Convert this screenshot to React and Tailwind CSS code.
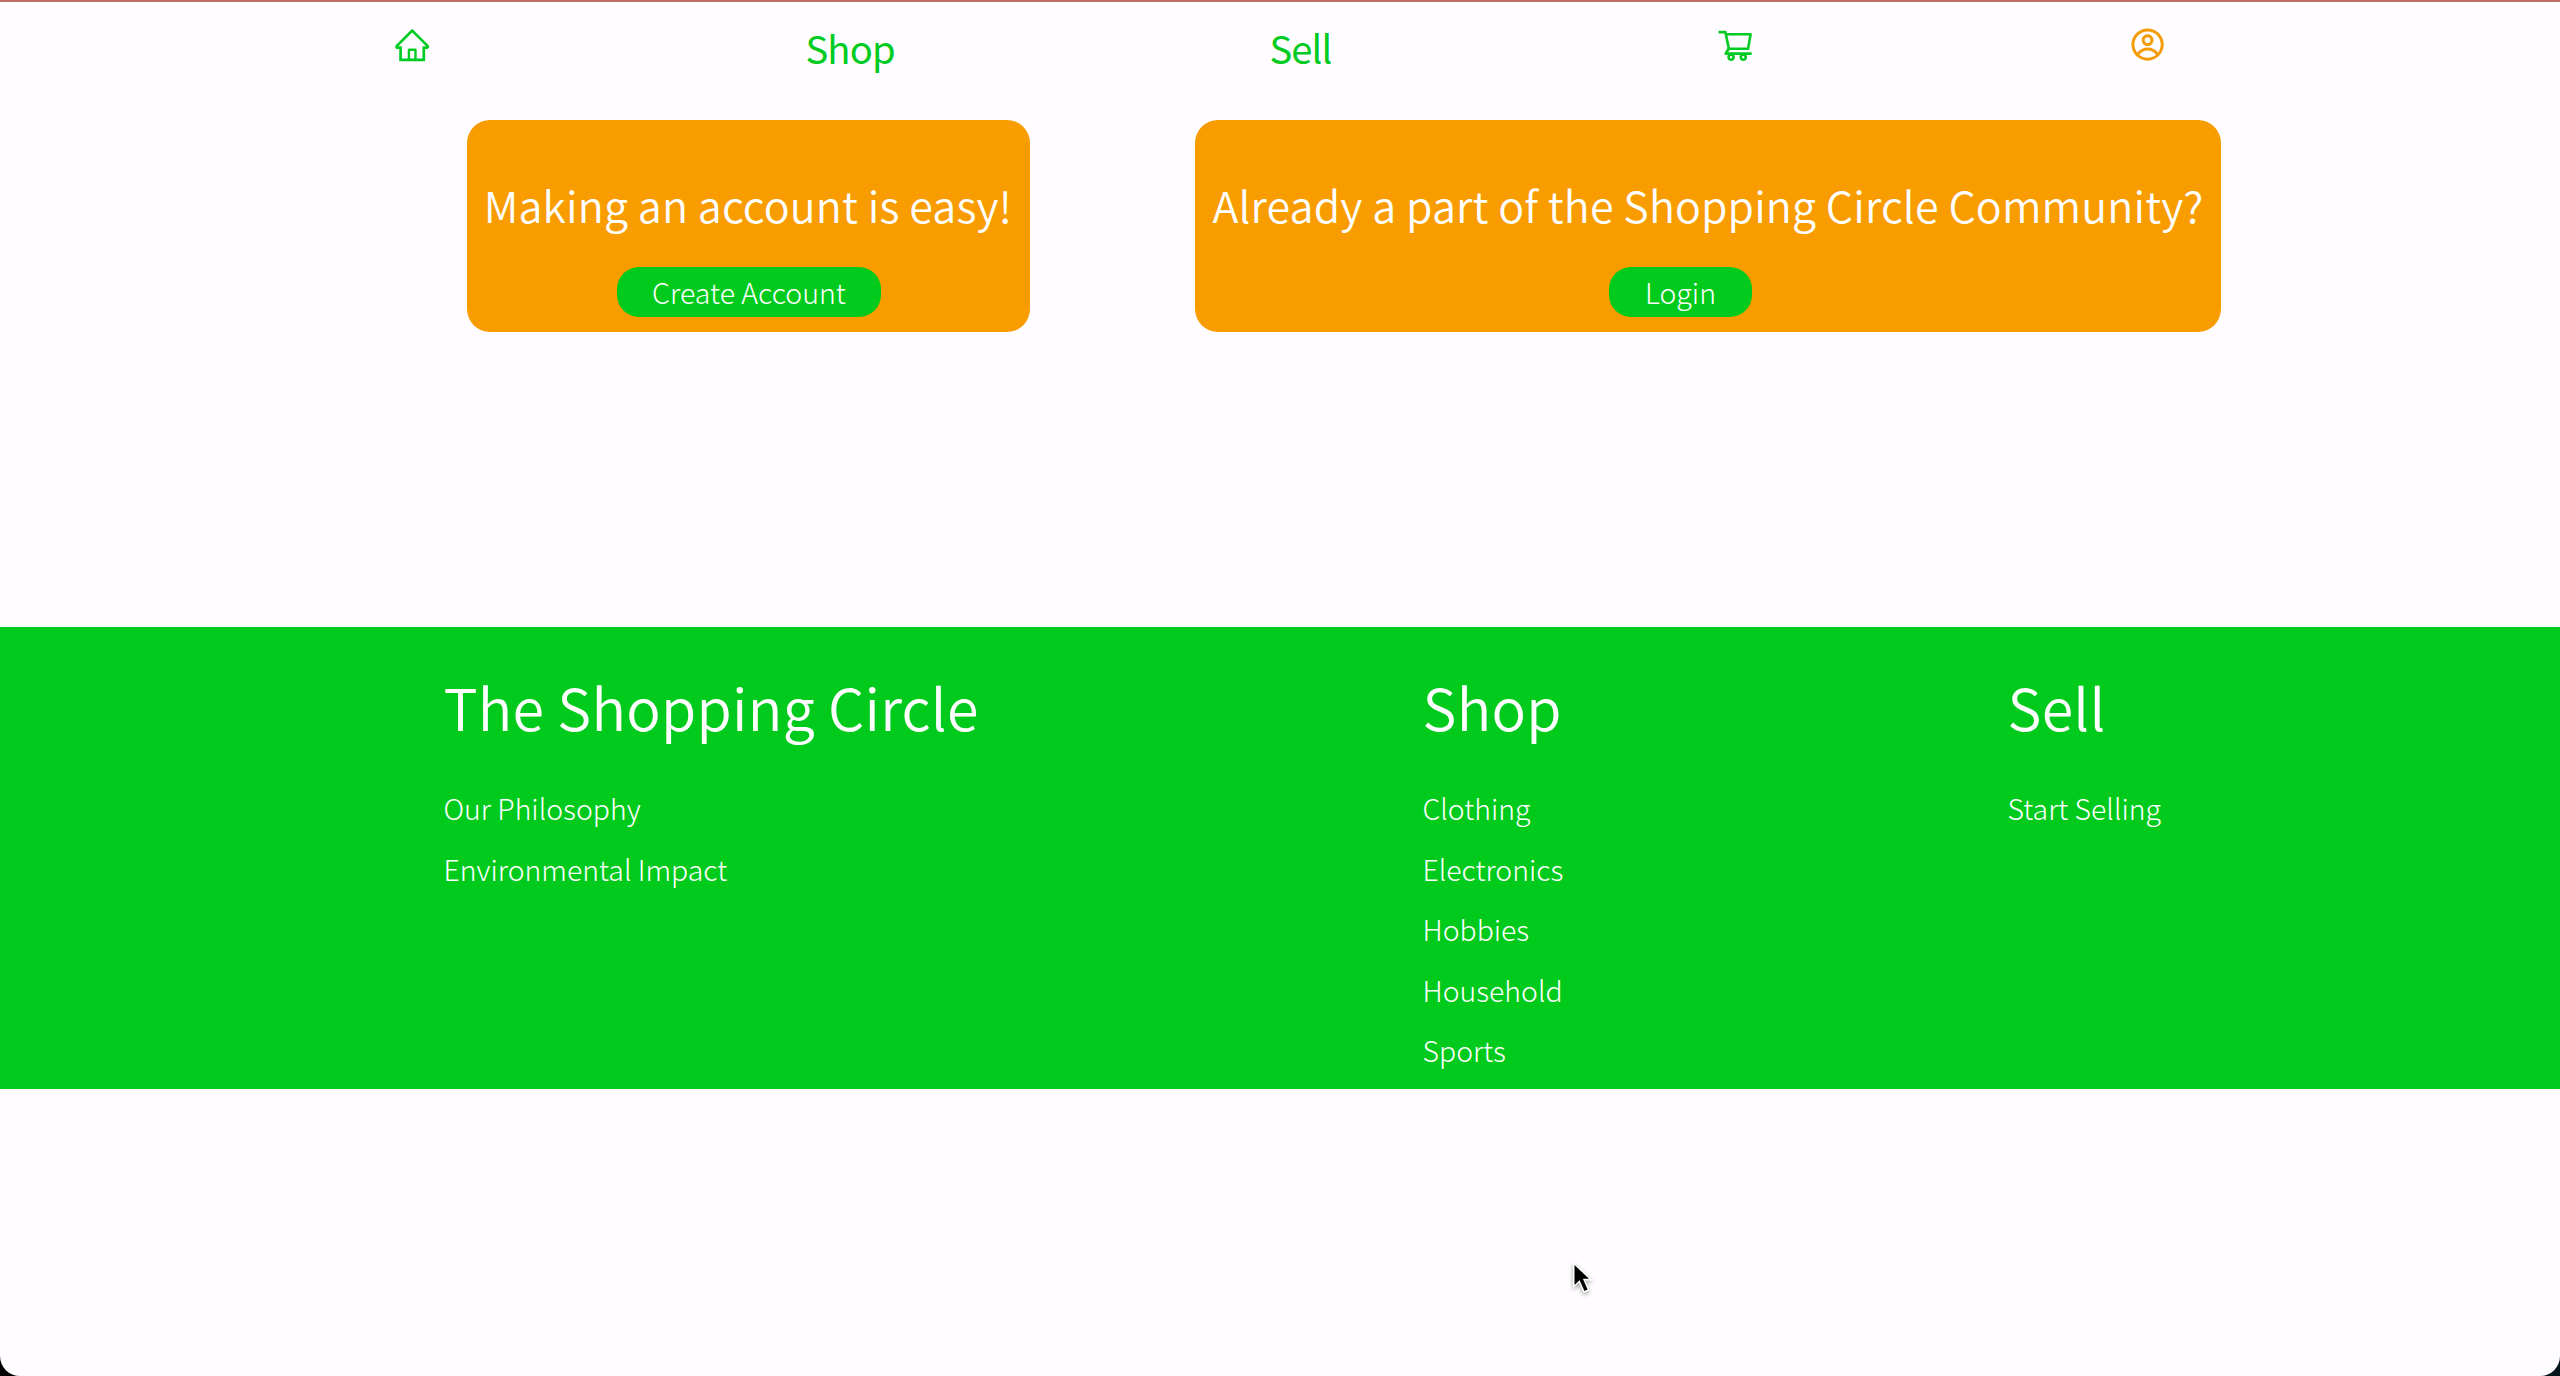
import { AiOutlineHome, AiOutlineShoppingCart } from 'react-icons/ai';
import { CgProfile } from 'react-icons/cg';

const columns = [
  { title: 'The Shopping Circle', links: ['Our Philosophy', 'Environmental Impact'] },
  { title: 'Shop', links: ['Clothing', 'Electronics', 'Hobbies', 'Household', 'Sports'] },
  { title: 'Sell', links: ['Start Selling'] },
];

function NavBar() {
  return (
    <nav className="grid h-[118px] grid-cols-[413px_464px_446.5px_414px_1fr] items-start pl-[392.5px] pt-[14.5px] text-[38.2px] leading-[60px] tracking-[-0.9px] text-[#00cb22]">
      <a className="pt-[9px]"><AiOutlineHome className="size-[38.4px]" /></a>
      <a className="pt-px">Shop</a>
      <a className="pt-px">Sell</a>
      <a className="pt-[9px]"><AiOutlineShoppingCart className="size-[38.4px]" /></a>
      <a className="pt-[10.5px] text-[#f39c08]"><CgProfile className="size-[35.2px]" /></a>
    </nav>
  );
}

function AccountCard({ title, action, className, buttonClassName }) {
  return (
    <section className={`flex h-[211.5px] flex-col items-center rounded-[23px] bg-[#f89c00] pt-[54px] text-white ${className}`}>
      <h2 className="text-[43px] leading-[60px] font-[350] tracking-[0.14px]">{title}</h2>
      <button className={`mt-[33px] h-[50px] rounded-[22px] bg-[#00cb1c] px-[35.5px] text-[28.5px] leading-[50px] font-light ${buttonClassName}`}>
        {action}
      </button>
    </section>
  );
}

function Footer() {
  return (
    <footer className="mt-[295.5px] grid h-[462px] grid-cols-[979px_585px_1fr] bg-[#00cb1c] pl-[443.5px] pt-[39.5px] text-white">
      {columns.map(({ title, links }) => (
        <div key={title}>
          <h1 className="text-[57.3px] leading-[80px] font-[350] tracking-[0.27px]">{title}</h1>
          <ul className="mt-[31.5px] text-[28.4px] leading-[60.5px] font-light">
            {links.map((link) => <li key={link}>{link}</li>)}
          </ul>
        </div>
      ))}
    </footer>
  );
}

function Cursor() {
  return (
    <svg className="absolute left-[1568px] top-[1256px] h-[44px] w-[32px] drop-shadow-[0_2px_2px_rgba(0,0,0,0.35)]" viewBox="0 0 32 44">
      <path d="M5 5.5V32.2L11 26.6L15.6 37L21.6 34.4L17.2 24.4H24.6Z" fill="#fff" />
      <path d="M6.5 9V29L11.6 24.2L16.4 34.9L19.6 33.5L14.9 22.8H21Z" fill="#000" />
    </svg>
  );
}

export default function App() {
  return (
    <div className="relative h-[1376px] w-[2560px] overflow-hidden bg-linear-to-r from-black to-[#03151b] font-['Noto_Sans_CJK_SC','Noto_Sans',sans-serif] whitespace-nowrap">
      <div className="h-full rounded-b-[20px] border-t-2 border-[#bf6f61] bg-[#fffdff]">
        <NavBar />
        <main className="flex gap-[165.5px] pl-[466.5px]">
          <AccountCard className="w-[563px]" buttonClassName="ml-[2px]" title="Making an account is easy!" action="Create Account" />
          <AccountCard className="w-[1026px]" buttonClassName="mr-[55px]" title="Already a part of the Shopping Circle Community?" action="Login" />
        </main>
        <Footer />
      </div>
      <Cursor />
    </div>
  );
}
